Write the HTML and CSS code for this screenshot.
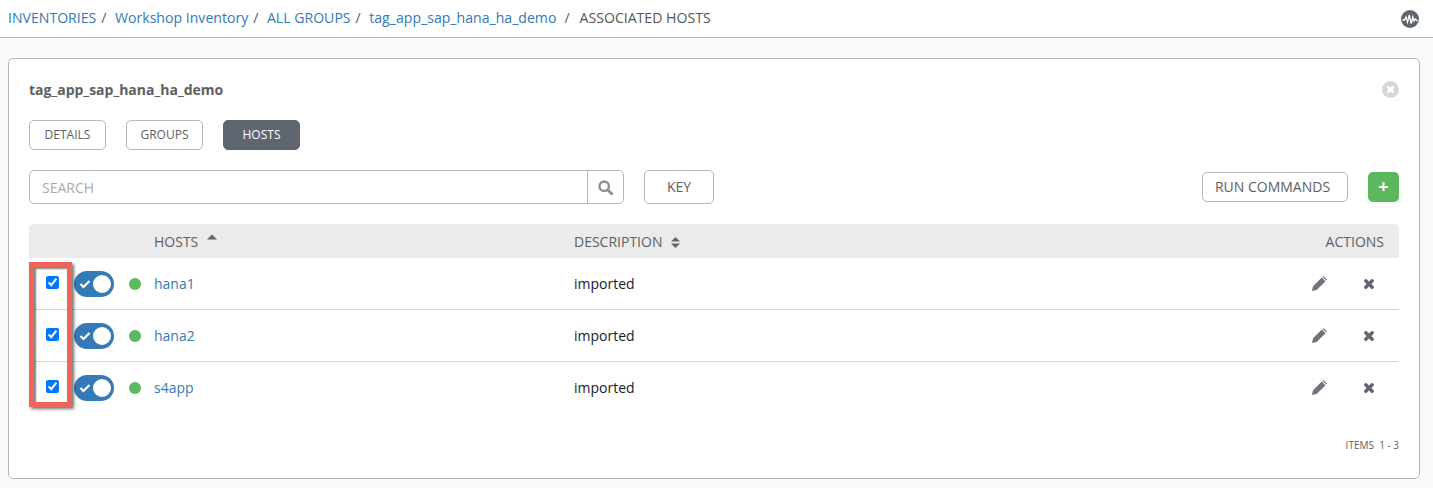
FILE: index.html
```html
<!DOCTYPE html>
<html lang="en">
<head>
  <meta charset="UTF-8" />
  <title>Associated Hosts</title>
  <link rel="stylesheet" href="styles.css">
</head>
<body>
<nav class="topbar">
  <div class="crumbs">
    <a href="#">INVENTORIES</a><span class="sep">/</span>
    <a href="#">Workshop Inventory</a><span class="sep">/</span>
    <a href="#">ALL GROUPS</a><span class="sep">/</span>
    <a href="#">tag_app_sap_hana_ha_demo</a><span class="sep sep-last">/</span>
    <span class="crumb-current">ASSOCIATED HOSTS</span>
  </div>
  <svg class="pulse" viewBox="0 0 18 18" width="18" height="18">
    <circle cx="9" cy="9" r="9" fill="#5f6670"/>
    <path d="M1.5 10 L3.5 10 L5 7 L6.5 12 L8.3 5 L10.2 13.5 L11.8 7 L13 11 L14.2 9 L16.5 11" fill="none" stroke="#fff" stroke-width="1.3"/>
  </svg>
</nav>

<main class="card">
  <div class="card-head">
    <h2 class="card-title">tag_app_sap_hana_ha_demo</h2>
    <svg class="close" viewBox="0 0 17 17" width="17" height="17">
      <circle cx="8.5" cy="8.5" r="8.5" fill="#d7d7d7"/>
      <path d="M5.5 5.5 L11.5 11.5 M11.5 5.5 L5.5 11.5" stroke="#fff" stroke-width="2.8"/>
    </svg>
  </div>

  <div class="tabs">
    <button class="tab">DETAILS</button>
    <button class="tab">GROUPS</button>
    <button class="tab tab-active">HOSTS</button>
  </div>

  <div class="toolbar">
    <div class="search">
      <span class="search-text">SEARCH</span>
      <span class="search-btn">
        <svg viewBox="0 0 14 14" width="15" height="15">
          <circle cx="5.8" cy="5.8" r="4.4" fill="none" stroke="#8a8f97" stroke-width="2.2"/>
          <path d="M9 9 L12.8 12.8" stroke="#8a8f97" stroke-width="2.6" stroke-linecap="round"/>
        </svg>
      </span>
    </div>
    <button class="btn btn-key">KEY</button>
    <button class="btn btn-run">RUN COMMANDS</button>
    <button class="btn-add">+</button>
  </div>

  <div class="table">
    <div class="row row-head">
      <div class="cell-hosts">HOSTS
        <svg class="caret" viewBox="0 0 10 6" width="10" height="6"><path d="M0 5.5 L5 0.5 L10 5.5 Z" fill="#666"/></svg>
      </div>
      <div class="cell-desc">DESCRIPTION
        <svg class="caret-both" viewBox="0 0 10 12" width="9" height="11"><path d="M0 5 L5 0 L10 5 Z M0 7 L5 12 L10 7 Z" fill="#666"/></svg>
      </div>
      <div class="cell-actions">ACTIONS</div>
    </div>

    <div class="row">
      <div class="cell-check"><input type="checkbox" checked></div>
      <div class="cell-toggle">
        <span class="toggle">
          <svg viewBox="0 0 12 10" width="12" height="10"><path d="M1.5 5 L4.5 8 L10.5 2" fill="none" stroke="#fff" stroke-width="2.2"/></svg>
          <span class="knob"></span>
        </span>
      </div>
      <div class="cell-dot"><span class="dot"></span></div>
      <div class="cell-hosts"><a href="#">hana1</a></div>
      <div class="cell-desc">imported</div>
      <div class="cell-actions">
        <svg class="icon-edit" viewBox="0 0 15 15" width="15" height="15"><path d="M0 15 L1 10.3 L9.8 1.5 L13.5 5.2 L4.7 14 Z M10.8 0.5 Q11.4 0 12 0.5 L14.5 3 Q15 3.6 14.5 4.2 L14.2 4.5 L10.5 0.8 Z" fill="#6f747c"/></svg>
        <svg class="icon-del" viewBox="0 0 12 12" width="12" height="12"><path d="M2.8 2.8 L9.2 9.2 M9.2 2.8 L2.8 9.2" stroke="#5f6670" stroke-width="3.4" stroke-linecap="round"/></svg>
      </div>
    </div>

    <div class="row">
      <div class="cell-check"><input type="checkbox" checked></div>
      <div class="cell-toggle">
        <span class="toggle">
          <svg viewBox="0 0 12 10" width="12" height="10"><path d="M1.5 5 L4.5 8 L10.5 2" fill="none" stroke="#fff" stroke-width="2.2"/></svg>
          <span class="knob"></span>
        </span>
      </div>
      <div class="cell-dot"><span class="dot"></span></div>
      <div class="cell-hosts"><a href="#">hana2</a></div>
      <div class="cell-desc">imported</div>
      <div class="cell-actions">
        <svg class="icon-edit" viewBox="0 0 15 15" width="15" height="15"><path d="M0 15 L1 10.3 L9.8 1.5 L13.5 5.2 L4.7 14 Z M10.8 0.5 Q11.4 0 12 0.5 L14.5 3 Q15 3.6 14.5 4.2 L14.2 4.5 L10.5 0.8 Z" fill="#6f747c"/></svg>
        <svg class="icon-del" viewBox="0 0 12 12" width="12" height="12"><path d="M2.8 2.8 L9.2 9.2 M9.2 2.8 L2.8 9.2" stroke="#5f6670" stroke-width="3.4" stroke-linecap="round"/></svg>
      </div>
    </div>

    <div class="row row-last">
      <div class="cell-check"><input type="checkbox" checked></div>
      <div class="cell-toggle">
        <span class="toggle">
          <svg viewBox="0 0 12 10" width="12" height="10"><path d="M1.5 5 L4.5 8 L10.5 2" fill="none" stroke="#fff" stroke-width="2.2"/></svg>
          <span class="knob"></span>
        </span>
      </div>
      <div class="cell-dot"><span class="dot"></span></div>
      <div class="cell-hosts"><a href="#">s4app</a></div>
      <div class="cell-desc">imported</div>
      <div class="cell-actions">
        <svg class="icon-edit" viewBox="0 0 15 15" width="15" height="15"><path d="M0 15 L1 10.3 L9.8 1.5 L13.5 5.2 L4.7 14 Z M10.8 0.5 Q11.4 0 12 0.5 L14.5 3 Q15 3.6 14.5 4.2 L14.2 4.5 L10.5 0.8 Z" fill="#6f747c"/></svg>
        <svg class="icon-del" viewBox="0 0 12 12" width="12" height="12"><path d="M2.8 2.8 L9.2 9.2 M9.2 2.8 L2.8 9.2" stroke="#5f6670" stroke-width="3.4" stroke-linecap="round"/></svg>
      </div>
    </div>

    <!-- red annotation round the checkboxes -->
    <div class="highlight"></div>
  </div>

  <div class="pager">ITEMS &nbsp;1 - 3</div>
</main>
</body>
</html>
```

FILE: styles.css
```css
html,
body {
  height: 100%;
}

body {
  font-family: "Open Sans", "DejaVu Sans", sans-serif;
  background-color: #fafafa;
  color: #161b1f;
  margin: 0;
  padding: 0;
  overflow: hidden;
}

a {
  color: #337ab7;
  text-decoration: none;
}

button {
  font-family: inherit;
  cursor: pointer;
}

.topbar {
  background-color: #fff;
  height: 37px;
  border-bottom: 1px solid #b7b7b7;
  padding: 0 14px 0 8px;
  display: flex;
  align-items: center;
  justify-content: space-between;
}

.crumbs {
  font-size: 14.1px;
  display: flex;
  align-items: center;
  white-space: nowrap;
  padding-bottom: 2px;
}

.sep {
  color: #5c5c5c;
  margin: 0 8.6px 0 4.9px;
}

.sep-last {
  margin: 0 10px 0 8px;
}

.crumb-current {
  color: #555;
}

.card {
  background-color: #fff;
  border: 1px solid #b7b7b7;
  border-radius: 5px;
  margin: 20px 13px 0 8px;
  padding: 20px;
  height: 379px;
}

.card-head {
  display: flex;
  justify-content: space-between;
  align-items: center;
  height: 21px;
}

.card-title {
  font-size: 14px;
  font-weight: 700;
  color: #606060;
  margin: 0;
}

.tabs {
  display: flex;
  gap: 20px;
  margin-top: 20px;
}

.tab {
  width: 77px;
  height: 30px;
  background-color: #fff;
  border: 1px solid #b7b7b7;
  border-radius: 5px;
  color: #606060;
  font-size: 12px;
  padding: 0 0 2px;
}

.tab-active {
  background-color: #5f6670;
  border-color: #5f6670;
  color: #fff;
}

.toolbar {
  display: flex;
  align-items: center;
  margin-top: 20px;
  height: 34px;
}

.search {
  width: 595px;
  height: 34px;
  box-sizing: border-box;
  border: 1px solid #b7b7b7;
  border-radius: 5px;
  display: flex;
  justify-content: space-between;
  align-items: center;
}

.search-text {
  color: #a9a9a9;
  font-size: 14px;
  padding-left: 12px;
}

.search-btn {
  width: 36px;
  height: 100%;
  box-sizing: border-box;
  border-left: 1px solid #b7b7b7;
  display: flex;
  align-items: center;
  justify-content: center;
}

.btn {
  background-color: #fff;
  border: 1px solid #b7b7b7;
  border-radius: 5px;
  color: #606060;
  font-size: 14px;
  padding: 0 0 2px;
}

.btn-key {
  width: 70px;
  height: 34px;
  margin-left: 20px;
}

.btn-run {
  width: 146px;
  height: 30px;
  margin-left: auto;
  padding-right: 5px;
}

.btn-add {
  width: 31px;
  height: 30px;
  margin-left: 20px;
  background-color: #5cb85c;
  border: none;
  border-radius: 5px;
  color: #fff;
  font-size: 18px;
  font-weight: 700;
  line-height: 1;
  padding: 0 0 2px;
}

.table {
  position: relative;
  margin-top: 20px;
}

.row {
  display: grid;
  grid-template-columns: 45px 55px 25px 420px 1fr 100px;
  align-items: center;
  height: 52px;
  box-sizing: border-box;
  border-bottom: 1px solid #d7d7d7;
  font-size: 14px;
}

.row-last {
  border-bottom-color: transparent;
}

.row-head {
  height: 34px;
  background-color: #ebebeb;
  border-bottom: none;
  border-radius: 5px 5px 0 0;
  color: #606060;
}

.row-head .cell-hosts {
  grid-column: 4;
}

.cell-check {
  display: flex;
  justify-content: flex-end;
  padding-right: 15px;
}

.cell-check input {
  margin: 0;
  margin-top: -3px;
  width: 13px;
  height: 13px;
}

.cell-toggle {
  display: flex;
}

.toggle {
  width: 40px;
  height: 26px;
  border-radius: 13px;
  background-color: #337ab7;
  display: flex;
  align-items: center;
  justify-content: space-between;
  box-sizing: border-box;
  padding: 0 3px 0 5px;
}

.knob {
  width: 18px;
  height: 18px;
  border-radius: 50%;
  background-color: #fff;
}

.cell-dot {
  display: flex;
}

.dot {
  width: 12px;
  height: 12px;
  border-radius: 50%;
  background-color: #5cb85c;
}

.cell-actions {
  display: flex;
  justify-content: flex-end;
  align-items: center;
  padding-right: 15px;
}

.row-head .caret {
  margin: 0 0 7px 5px;
}

.caret-both {
  margin-left: 5px;
  vertical-align: -1px;
}

.icon-edit {
  margin-right: 36px;
}

.icon-del {
  margin-right: 9px;
}

.highlight {
  position: absolute;
  left: 0;
  top: 38px;
  width: 43px;
  height: 145px;
  box-sizing: border-box;
  border: 5px solid #f0655a;
  box-shadow: 2px 2px 3px rgba(0, 0, 0, 0.55), inset 2px 2px 2px rgba(0, 0, 0, 0.5);
}

.pager {
  text-align: right;
  font-size: 10px;
  color: #606060;
  margin-top: 24px;
}
```
